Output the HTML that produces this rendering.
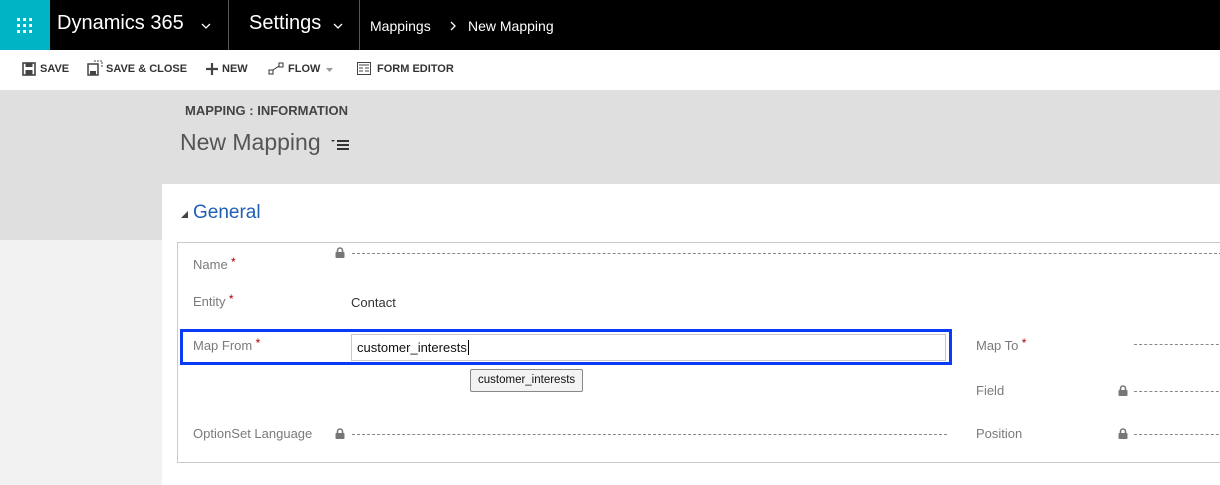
<!DOCTYPE html>
<html><head><meta charset="utf-8"><style>
*{margin:0;padding:0;box-sizing:border-box}
body{width:1220px;height:485px;overflow:hidden;background:#f2f2f2;font-family:"Segoe UI","Liberation Sans",sans-serif;position:relative}
.a{position:absolute}
.top{left:0;top:0;width:1220px;height:50px;background:#000;color:#fff}
.tb{left:0;top:50px;width:1220px;height:40px;background:#fff;font-size:11px;color:#333;font-weight:bold}
.gray{left:0;top:90px;width:1220px;height:150px;background:#dfdfdf}
.panel{left:162px;top:184px;width:1058px;height:301px;background:#fff}
.lbl{font-size:13px;color:#7a7a7a}
.req{color:#a00;font-size:12px;vertical-align:3px}
.dash{border-top:1px dashed #888;height:0}
</style></head><body>
<svg width="0" height="0" style="position:absolute"><defs><symbol id="lk" viewBox="0 0 10 11"><path d="M2.5 5V3.5a2.5 2.5 0 0 1 5 0V5" fill="none" stroke="#777" stroke-width="1.6"/><rect x="0.5" y="5" width="9" height="6" rx="1" fill="#777"/></symbol></defs></svg>
<div class="a top">
 <div class="a" style="left:0;top:0;width:50px;height:50px;background:#00b4c6">
  <svg class="a" style="left:17px;top:18px" width="15" height="15" viewBox="0 0 15 15" fill="#fff"><rect x="0" y="0" width="3" height="3"/><rect x="6" y="0" width="3" height="3"/><rect x="12" y="0" width="3" height="3"/><rect x="0" y="6" width="3" height="3"/><rect x="6" y="6" width="3" height="3"/><rect x="12" y="6" width="3" height="3"/><rect x="0" y="12" width="3" height="3"/><rect x="6" y="12" width="3" height="3"/><rect x="12" y="12" width="3" height="3"/></svg>
 </div>
 <div class="a" style="left:57px;top:12px;font-size:20px">Dynamics 365</div>
 <svg class="a" style="left:201px;top:23px" width="10" height="6" viewBox="0 0 10 6"><path d="M1 1l4 4 4-4" fill="none" stroke="#fff" stroke-width="1.3"/></svg>
 <div class="a" style="left:228px;top:0;width:1px;height:50px;background:#555"></div>
 <div class="a" style="left:249px;top:12px;font-size:20px">Settings</div>
 <svg class="a" style="left:333px;top:23px" width="10" height="6" viewBox="0 0 10 6"><path d="M1 1l4 4 4-4" fill="none" stroke="#fff" stroke-width="1.3"/></svg>
 <div class="a" style="left:359px;top:0;width:1px;height:50px;background:#555"></div>
 <div class="a" style="left:370px;top:18px;font-size:14px">Mappings</div>
 <svg class="a" style="left:450px;top:21px" width="6" height="10" viewBox="0 0 6 10"><path d="M1 1l4 4-4 4" fill="none" stroke="#fff" stroke-width="1.3"/></svg>
 <div class="a" style="left:468px;top:18px;font-size:14px">New Mapping</div>
</div>
<div class="a tb">
 <svg class="a" style="left:22px;top:12px" width="14" height="14" viewBox="0 0 14 14"><rect x="1" y="1" width="12" height="12" fill="none" stroke="#444" stroke-width="1.6"/><rect x="3.5" y="1" width="7" height="4" fill="#444"/><rect x="3.5" y="8" width="7" height="5" fill="#444"/></svg>
 <div class="a" style="left:40px;top:13px">SAVE</div>
 <svg class="a" style="left:87px;top:10px" width="16" height="16" viewBox="0 0 16 16"><rect x="1" y="4" width="10" height="11" fill="none" stroke="#444" stroke-width="1.5"/><rect x="3" y="11" width="6" height="4" fill="#444"/><path d="M7 1h8v7" fill="none" stroke="#444" stroke-dasharray="2 1"/></svg>
 <div class="a" style="left:106px;top:13px">SAVE &amp; CLOSE</div>
 <svg class="a" style="left:206px;top:13px" width="12" height="12" viewBox="0 0 12 12"><path d="M6 0v12M0 6h12" stroke="#444" stroke-width="2.2"/></svg>
 <div class="a" style="left:222px;top:13px">NEW</div>
 <svg class="a" style="left:268px;top:12px" width="18" height="14" viewBox="0 0 18 14"><rect x="1" y="8" width="4" height="4" fill="none" stroke="#333"/><rect x="11" y="1" width="4" height="4" fill="none" stroke="#333"/><path d="M5 8L11 4" stroke="#333"/></svg>
 <div class="a" style="left:288px;top:13px">FLOW</div>
 <svg class="a" style="left:326px;top:18px" width="7" height="4" viewBox="0 0 7 4"><path d="M0 0h7L3.5 4z" fill="#999"/></svg>
 <svg class="a" style="left:357px;top:12px" width="14" height="13" viewBox="0 0 14 13"><rect x="0.5" y="0.5" width="13" height="12" fill="none" stroke="#444"/><path d="M2 3h10M2 6h4M8 6h4M2 9h4M8 9h4" stroke="#444"/></svg>
 <div class="a" style="left:377px;top:13px">FORM EDITOR</div>
</div>
<div class="a gray"></div>
<div class="a" style="left:185px;top:103px;font-size:13px;font-weight:bold;color:#444">MAPPING : INFORMATION</div>
<div class="a" style="left:180px;top:129px;font-size:23px;color:#555;font-weight:300">New Mapping</div>
<svg class="a" style="left:331px;top:139px" width="18" height="12" viewBox="0 0 18 12"><path d="M0 1h4L2 3z" fill="#333"/><path d="M6 2h12M6 6h12M6 10h12" stroke="#333" stroke-width="2"/></svg>
<div class="a panel"></div>
<svg class="a" style="left:181px;top:211px" width="7" height="7" viewBox="0 0 7 7"><path d="M7 0v7H0z" fill="#444"/></svg>
<div class="a" style="left:193px;top:202px;font-size:19px;color:#1f5fb5">General</div>
<div class="a" style="left:177px;top:242px;width:1050px;height:221px;border:1px solid #c8cccc"></div>
<div class="a lbl" style="left:193px;top:255px">Name<span class="req"> *</span></div>
<svg class="a" style="left:335px;top:247px" width="10" height="11"><use href="#lk"/></svg>
<div class="a dash" style="left:352px;top:253px;width:870px"></div>
<div class="a lbl" style="left:193px;top:292px">Entity<span class="req"> *</span></div>
<div class="a" style="left:351px;top:295px;font-size:13px;color:#333">Contact</div>
<div class="a" style="left:180px;top:329px;width:772px;height:36px;border:3px solid #0a3cf5"></div>
<div class="a lbl" style="left:193px;top:336px">Map From<span class="req"> *</span></div>
<div class="a" style="left:351px;top:334px;width:595px;height:27px;border:1px solid #c8c8c8;background:#fff;font-size:13px;color:#111;padding:5px 0 0 5px">customer_interests<span style="border-left:1px solid #000;margin-left:1px"></span></div>
<div class="a" style="left:470px;top:369px;width:113px;height:23px;border:1px solid #888;border-radius:2px;background:#f3f3f3;font-size:11.5px;color:#111;padding:4px 0 0 7px">customer_interests</div>
<div class="a lbl" style="left:193px;top:426px">OptionSet Language</div>
<svg class="a" style="left:335px;top:428px" width="10" height="11"><use href="#lk"/></svg>
<div class="a dash" style="left:352px;top:434px;width:595px"></div>
<div class="a lbl" style="left:976px;top:336px">Map To<span class="req"> *</span></div>
<div class="a dash" style="left:1134px;top:344px;width:90px"></div>
<div class="a lbl" style="left:976px;top:383px">Field</div>
<svg class="a" style="left:1118px;top:385px" width="10" height="11"><use href="#lk"/></svg>
<div class="a dash" style="left:1134px;top:391px;width:90px"></div>
<div class="a lbl" style="left:976px;top:426px">Position</div>
<svg class="a" style="left:1118px;top:428px" width="10" height="11"><use href="#lk"/></svg>
<div class="a dash" style="left:1134px;top:434px;width:90px"></div>
</body></html>
